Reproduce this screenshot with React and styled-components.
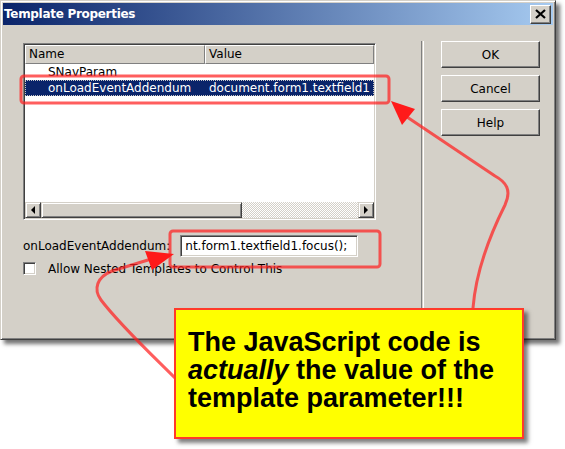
import React from 'react';
import styled, { createGlobalStyle } from 'styled-components';

const GlobalStyle = createGlobalStyle`
html, body {
  margin: 0;
  padding: 0;
  background: #fff;
}
body {
  font-family: "DejaVu Sans", Tahoma, sans-serif;
  font-size: 12px;
  color: #000;
}
`

const Stage = styled.div`
position: relative;
width: 565px;
height: 449px;
overflow: hidden;
background: #fff;
`;

const Dialog = styled.div`
box-sizing: border-box;
width: 556px;
height: 340px;
background: #d4d0c8;
border: 1px solid;
border-color: #d4d0c8 #404040 #404040 #d4d0c8;
box-shadow: inset 1px 1px #fff, inset -1px -1px #808080, 4px 4px 4px rgba(0,0,0,0.55);
padding: 2px;
display: flex;
flex-direction: column;
`;

const TitleBar = styled.div`
height: 22px;
display: flex;
align-items: center;
justify-content: space-between;
padding: 0 2px 0 1px;
background: linear-gradient(to right, #0a246a, #a6caf0);
`;

const Title = styled.span`
color: #fff;
font-weight: bold;
font-size: 12px;
letter-spacing: -0.3px;
`;

const CloseButton = styled.div`
box-sizing: border-box;
width: 21px;
height: 19px;
display: flex;
align-items: center;
justify-content: center;
background: #d4d0c8;
border: 1px solid;
border-color: #fff #404040 #404040 #fff;
box-shadow: inset -1px -1px #808080;
`;

const Body = styled.div`
flex: 1;
display: flex;
`;

const LeftPane = styled.div`
width: 418px;
box-sizing: border-box;
padding: 18px 0 0 20px;
display: flex;
flex-direction: column;
`;

const ListView = styled.div`
box-sizing: border-box;
width: 353px;
height: 177px;
background: #fff;
border: 1px solid;
border-color: #808080 #fff #fff #808080;
box-shadow: inset 1px 1px #404040, inset -1px -1px #d4d0c8;
padding: 1px;
display: flex;
flex-direction: column;
overflow: hidden;
`;

const HeaderRow = styled.div`
display: grid;
grid-template-columns: 180px 1fr;
height: 19px;
`;

const HeaderCell = styled.div`
box-sizing: border-box;
background: #d4d0c8;
border: 1px solid;
border-color: #fff #808080 #808080 #fff;
padding-left: 3px;
line-height: 17px;
white-space: nowrap;
`;

const Row = styled.div`
display: grid;
grid-template-columns: 180px 1fr;
height: 16px;
line-height: 16px;
white-space: nowrap;
overflow: hidden;
background: ${p => (p.selected ? '#0a246a' : 'transparent')};
color: ${p => (p.selected ? '#fff' : '#000')};
outline: ${p => (p.selected ? '1px dotted #c8c8c8' : 'none')};
outline-offset: -1px;
`;

const NameCell = styled.span`
padding-left: 23px;
overflow: hidden;
`;

const ValueCell = styled.span`
padding-left: 4px;
overflow: hidden;
`;

const Filler = styled.div`
flex: 1;
`;

const HScroll = styled.div`
height: 16px;
display: flex;
background-image: conic-gradient(#fff 25%, #d4d0c8 0 50%, #fff 0 75%, #d4d0c8 0);
background-size: 2px 2px;
`;

const ScrollPart = styled.div`
box-sizing: border-box;
width: ${p => p.w}px;
height: 16px;
background: #d4d0c8;
border: 1px solid;
border-color: #d4d0c8 #404040 #404040 #d4d0c8;
box-shadow: inset 1px 1px #fff, inset -1px -1px #808080;
display: flex;
align-items: center;
justify-content: center;
`;

const Track = styled.div`
flex: 1;
`;

const Arrow = styled.span`
width: 0;
height: 0;
border-top: 4px solid transparent;
border-bottom: 4px solid transparent;
${p => (p.dir === 'left' ? 'border-right: 4px solid #000;' : 'border-left: 4px solid #000;')}
`;

const FieldRow = styled.div`
margin-top: 15px;
display: flex;
align-items: center;
height: 22px;
`;

const Label = styled.span`
white-space: nowrap;
`;

const TextBox = styled.div`
box-sizing: border-box;
margin-left: 10px;
width: 178px;
height: 22px;
background: #fff;
border: 1px solid;
border-color: #808080 #fff #fff #808080;
box-shadow: inset 1px 1px #404040, inset -1px -1px #d4d0c8;
padding: 0 4px;
line-height: 20px;
white-space: nowrap;
overflow: hidden;
`;

const CheckRow = styled.div`
margin-top: 5px;
display: flex;
align-items: center;
height: 13px;
`;

const CheckBox = styled.span`
box-sizing: border-box;
width: 13px;
height: 13px;
background: #fff;
border: 1px solid;
border-color: #808080 #fff #fff #808080;
box-shadow: inset 1px 1px #404040, inset -1px -1px #d4d0c8;
margin-right: 12px;
`;

const Separator = styled.div`
width: 1px;
margin: 16px 0 5px;
border-left: 1px solid #808080;
border-right: 1px solid #fff;
`;

const RightPane = styled.div`
padding: 16px 0 0 17px;
display: flex;
flex-direction: column;
gap: 7px;
`;

const Button = styled.div`
box-sizing: border-box;
width: 99px;
height: 27px;
display: flex;
align-items: center;
justify-content: center;
background: #d4d0c8;
border: 1px solid;
border-color: #fff #404040 #404040 #fff;
box-shadow: inset -1px -1px #808080;
`;

const Overlay = styled.svg`
position: absolute;
left: 0;
top: 0;
pointer-events: none;
`;

const Callout = styled.div`
position: absolute;
left: 174px;
top: 308px;
box-sizing: border-box;
width: 350px;
height: 131px;
background: #ffff00;
border: 2px solid #ff3a2a;
box-shadow: 4px 4px 4px rgba(0,0,0,0.5);
padding: 18px 0 0 12px;
font-family: "Liberation Sans", Arial, sans-serif;
font-weight: bold;
font-size: 27px;
line-height: 28px;
white-space: nowrap;
`;

export default function App() {
  return (
    <Stage>
      <GlobalStyle />
      <Dialog>
        <TitleBar>
          <Title>Template Properties</Title>
          <CloseButton>
            <svg width="11" height="10" viewBox="0 0 11 10">
              <path d="M1 1 L10 9 M10 1 L1 9" stroke="#000" strokeWidth="2.2" />
            </svg>
          </CloseButton>
        </TitleBar>
        <Body>
          <LeftPane>
            <ListView>
              <HeaderRow>
                <HeaderCell>Name</HeaderCell>
                <HeaderCell>Value</HeaderCell>
              </HeaderRow>
              <Row>
                <NameCell>SNavParam</NameCell>
                <ValueCell></ValueCell>
              </Row>
              <Row selected>
                <NameCell>onLoadEventAddendum</NameCell>
                <ValueCell>document.form1.textfield1</ValueCell>
              </Row>
              <Filler />
              <HScroll>
                <ScrollPart w={16}><Arrow dir="left" /></ScrollPart>
                <ScrollPart w={201} />
                <Track />
                <ScrollPart w={16}><Arrow dir="right" /></ScrollPart>
              </HScroll>
            </ListView>
            <FieldRow>
              <Label>onLoadEventAddendum:</Label>
              <TextBox>nt.form1.textfield1.focus();</TextBox>
            </FieldRow>
            <CheckRow>
              <CheckBox />
              <Label>Allow Nested Templates to Control This</Label>
            </CheckRow>
          </LeftPane>
          <Separator />
          <RightPane>
            <Button>OK</Button>
            <Button>Cancel</Button>
            <Button>Help</Button>
          </RightPane>
        </Body>
      </Dialog>

      <Overlay width="565" height="449" viewBox="0 0 565 449">
        <g fill="none" stroke="#ff2020" strokeOpacity="0.72" strokeWidth="3" strokeLinecap="round" strokeLinejoin="round">
          <rect x="21" y="76" width="368" height="27" rx="3" />
          <rect x="170" y="231" width="210" height="36" rx="3" />
          <path d="M473 308 C476 270 490 235 505 205 C512 190 506 182 495 176 L407 117" />
          <path d="M175 378 C150 353 120 325 101 300 C93 289 97 277 112 271 L148 260" />
        </g>
        <polygon points="391,101 415,109 402,125" fill="#ff1a1a" />
        <polygon points="174,254 145,251 152,270" fill="#ff1a1a" />
      </Overlay>

      <Callout>
        The JavaScript code is<br />
        <i>actually</i> the value of the<br />
        template parameter!!!
      </Callout>
    </Stage>
  );
}
